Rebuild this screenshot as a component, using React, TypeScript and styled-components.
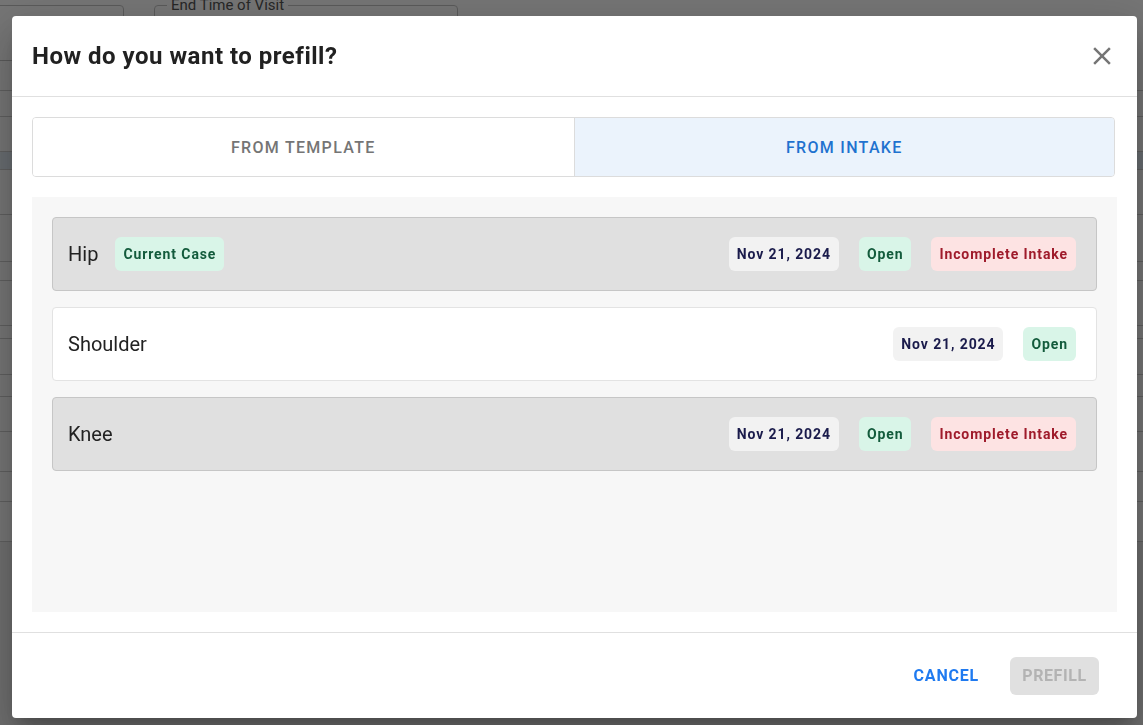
import styled, { createGlobalStyle } from 'styled-components';

const GlobalStyle = createGlobalStyle`
  * { box-sizing: border-box; }
  body {
    margin: 0;
    font-family: Roboto, "Liberation Sans", Arial, sans-serif;
    overflow: hidden;
  }
`;

// underlying page (dimmed by the backdrop)
const Page = styled.div`
  height: 725px;
  background: #fff;
  overflow: hidden;
`;

const FieldRow = styled.div`
  display: flex;
  gap: 30px;
  padding-top: 5px;
  margin-left: -40px;
`;

const Field = styled.fieldset<{ $width: number }>`
  width: ${(p) => p.$width}px;
  height: 56px;
  margin: 0;
  padding: 0 12px;
  border: 1px solid #c4c4c4;
  border-radius: 4px;

  legend {
    padding: 0 4px;
    font-size: 15px;
    color: #555;
    line-height: 1px;
  }
`;

const PageRow = styled.div<{ $height: number; $tint?: boolean }>`
  height: ${(p) => p.$height}px;
  border-bottom: 1px solid #cfcfcf;
  background: ${(p) => (p.$tint ? '#e2ecf4' : '#fff')};
`;

const PageFooter = styled.div`
  height: 200px;
  background: #f0f0f0;
`;

const Backdrop = styled.div`
  position: fixed;
  inset: 0;
  background: rgba(0, 0, 0, 0.54);
`;

const Modal = styled.div`
  position: fixed;
  left: 12px;
  top: 16px;
  width: 1125px;
  height: 702px;
  background: #fff;
  border-radius: 4px;
  box-shadow: 0 11px 15px -7px rgba(0, 0, 0, 0.2), 0 24px 38px 3px rgba(0, 0, 0, 0.14),
    0 9px 46px 8px rgba(0, 0, 0, 0.12);
  display: flex;
  flex-direction: column;
`;

const Header = styled.header`
  height: 81px;
  flex-shrink: 0;
  display: flex;
  align-items: center;
  justify-content: space-between;
  padding: 0 20px 0 20px;
  border-bottom: 1px solid #e0e0e0;
`;

const Title = styled.h2`
  margin: 0;
  font-size: 24px;
  font-weight: 700;
  color: #212121;
  letter-spacing: 0.5px;
`;

const CloseButton = styled.button`
  border: none;
  background: none;
  padding: 0;
  width: 30px;
  height: 30px;
  color: #757575;
  cursor: pointer;
  display: flex;
  align-items: center;
  justify-content: center;
`;

const Body = styled.div`
  flex: 1;
  display: flex;
  flex-direction: column;
  gap: 20px;
  padding: 20px;
  min-height: 0;
`;

const Tabs = styled.div`
  display: grid;
  grid-template-columns: 1fr 1fr;
  height: 60px;
  width: 1083px;
  border: 1px solid #dcdcdc;
  border-radius: 4px;
  overflow: hidden;
`;

const Tab = styled.button<{ $active?: boolean }>`
  border: none;
  border-left: ${(p) => (p.$active ? '1px solid #dcdcdc' : 'none')};
  background: ${(p) => (p.$active ? '#ebf3fc' : '#fff')};
  color: ${(p) => (p.$active ? '#1f72cf' : '#757575')};
  font-family: inherit;
  font-size: 16px;
  font-weight: 500;
  letter-spacing: 1.3px;
  text-transform: uppercase;
  cursor: pointer;
`;

const Panel = styled.div`
  flex: 1;
  background: #f7f7f7;
  padding: 20px;
  display: flex;
  flex-direction: column;
  gap: 16px;
`;

const CaseRow = styled.div<{ $muted?: boolean }>`
  height: 74px;
  flex-shrink: 0;
  display: flex;
  align-items: center;
  gap: 20px;
  padding: 0 20px 0 15px;
  border-radius: 4px;
  border: 1px solid ${(p) => (p.$muted ? '#c6c6c6' : '#e3e3e3')};
  background: ${(p) => (p.$muted ? '#e0e0e0' : '#fff')};
`;

const CaseName = styled.div`
  display: flex;
  align-items: center;
  gap: 17px;
  margin-right: auto;
  font-size: 20px;
  color: #222;
`;

const badgeColors = {
  date: { bg: '#f2f2f2', fg: '#1a1b4b' },
  green: { bg: '#d9f5e8', fg: '#135b3c' },
  red: { bg: '#fde3e3', fg: '#9f1b2b' },
};

const Badge = styled.span<{ $tone: keyof typeof badgeColors }>`
  height: 34px;
  display: inline-flex;
  align-items: center;
  padding: 0 8px;
  border-radius: 6px;
  font-size: 14px;
  font-weight: 700;
  letter-spacing: 0.9px;
  background: ${(p) => badgeColors[p.$tone].bg};
  color: ${(p) => badgeColors[p.$tone].fg};
`;

const Footer = styled.footer`
  height: 86px;
  flex-shrink: 0;
  border-top: 1px solid #e0e0e0;
  display: flex;
  align-items: center;
  justify-content: flex-end;
  gap: 23px;
  padding: 0 38px 0 20px;
`;

const TextButton = styled.button`
  border: none;
  background: none;
  padding: 6px 8px;
  font-family: inherit;
  font-size: 16px;
  font-weight: 700;
  letter-spacing: 0.8px;
  text-transform: uppercase;
  color: #1f7af0;
  cursor: pointer;
`;

const PrimaryButton = styled.button`
  border: none;
  height: 38px;
  width: 89px;
  padding: 0;
  border-radius: 6px;
  background: #e0e0e0;
  color: #b3b3b3;
  font-family: inherit;
  font-size: 16px;
  font-weight: 700;
  letter-spacing: 0.6px;
  text-transform: uppercase;
`;

interface CaseItem {
  name: string;
  current?: boolean;
  date: string;
  incomplete?: boolean;
}

const cases: CaseItem[] = [
  { name: 'Hip', current: true, date: 'Nov 21, 2024', incomplete: true },
  { name: 'Shoulder', date: 'Nov 21, 2024' },
  { name: 'Knee', date: 'Nov 21, 2024', incomplete: true },
];

const pageRows = [30, 26, 35, 18, 45, 47, 19, 45, 13, 36, 22, 35, 40, 30, 40];

const App = () => {
  return (
    <>
      <GlobalStyle />
      <Page>
        <FieldRow>
          <Field $width={164} />
          <Field $width={304}>
            <legend>End Time of Visit</legend>
          </Field>
        </FieldRow>
        {pageRows.map((h, i) => (
          <PageRow key={i} $height={h} $tint={i === 3} />
        ))}
        <PageFooter />
      </Page>
      <Backdrop />
      <Modal role="dialog">
        <Header>
          <Title>How do you want to prefill?</Title>
          <CloseButton aria-label="close">
            <svg width="30" height="30" viewBox="0 0 24 24" fill="currentColor">
              <path d="M19 6.41 17.59 5 12 10.59 6.41 5 5 6.41 10.59 12 5 17.59 6.41 19 12 13.41 17.59 19 19 17.59 13.41 12z" />
            </svg>
          </CloseButton>
        </Header>
        <Body>
          <Tabs>
            <Tab>From Template</Tab>
            <Tab $active>From Intake</Tab>
          </Tabs>
          <Panel>
            {cases.map((c) => (
              <CaseRow key={c.name} $muted={c.incomplete}>
                <CaseName>
                  {c.name}
                  {c.current && <Badge $tone="green">Current Case</Badge>}
                </CaseName>
                <Badge $tone="date">{c.date}</Badge>
                <Badge $tone="green">Open</Badge>
                {c.incomplete && <Badge $tone="red">Incomplete Intake</Badge>}
              </CaseRow>
            ))}
          </Panel>
        </Body>
        <Footer>
          <TextButton>Cancel</TextButton>
          <PrimaryButton disabled>Prefill</PrimaryButton>
        </Footer>
      </Modal>
    </>
  );
};

export default App;
